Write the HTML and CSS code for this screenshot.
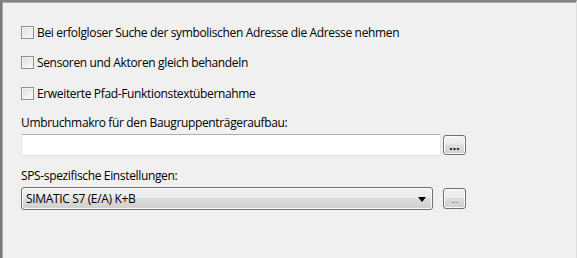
FILE: index.html
```html
<!DOCTYPE html>
<html lang="de">
<head>
  <meta charset="UTF-8" />
  <title>Einstellungen</title>
  <link rel="stylesheet" href="styles.css">
</head>
<body>
  <div class="panel">
    <div class="checks">
      <label class="check-row"><span class="box"></span>Bei erfolgloser Suche der symbolischen Adresse die Adresse nehmen</label>
      <label class="check-row"><span class="box"></span>Sensoren und Aktoren gleich behandeln</label>
      <label class="check-row"><span class="box"></span>Erweiterte Pfad-Funktionstextübernahme</label>
    </div>

    <div class="field">
      <div class="field-label">Umbruchmakro für den Baugruppenträgeraufbau:</div>
      <div class="field-line">
        <div class="textbox"></div>
        <button class="dots-btn bold">...</button>
      </div>
    </div>

    <div class="field">
      <div class="field-label">SPS-spezifische Einstellungen:</div>
      <div class="field-line wide-gap">
        <div class="combo">
          <span>SIMATIC S7 (E/A) K+B</span>
          <span class="arrow"></span>
        </div>
        <button class="dots-btn small">...</button>
      </div>
    </div>
  </div>
</body>
</html>
```

FILE: styles.css
```css
* {
  box-sizing: border-box;
}

html, body {
  margin: 0;
  height: 100%;
}

body {
  font-family: 'Open Sans', 'Noto Sans', sans-serif;
  font-size: 12px;
  letter-spacing: -0.35px;
  color: #000;
  background: #f0f0f0;
}

.panel {
  height: 258px;
  border-top: 2px solid #858585;
  border-left: 2px solid #7a7a7a;
  border-right: 1px solid #dedede;
  box-shadow: inset 1px 1px 0 #a8a8a8;
  padding: 24px 0 0 19px;
}

.checks {
  display: flex;
  flex-direction: column;
}

.check-row {
  display: flex;
  align-items: center;
  height: 13px;
  margin-bottom: 17px;
  line-height: 13px;
}

.check-row:nth-child(2) {
  margin-bottom: 18px;
}

.check-row:last-child {
  margin-bottom: 0;
}

.box {
  width: 13px;
  height: 13px;
  border: 1px solid #8e8f8f;
  background: linear-gradient(135deg, #dcdcdc, #fbfbfb);
  box-shadow: inset 0 0 0 1px #f4f4f4;
  margin-right: 3px;
  flex: none;
}

.field {
  margin-top: 15px;
}

.field + .field {
  margin-top: 12px;
}

.field-label {
  height: 16px;
  line-height: 16px;
  margin-bottom: 3px;
}

.field-line {
  display: flex;
  align-items: center;
  gap: 2px;
}

.field-line.wide-gap {
  gap: 10px;
}

.textbox {
  width: 420px;
  height: 22px;
  background: #fff;
  border: 1px solid #e2e3ea;
  border-top-color: #abadb3;
  border-radius: 2px;
}

.combo {
  width: 412px;
  height: 23px;
  border: 1px solid #707070;
  border-radius: 3px;
  background: linear-gradient(#f2f2f2 0%, #ebebeb 45%, #dddddd 50%, #cfcfcf 100%);
  box-shadow: inset 0 0 0 1px #fbfbfb;
  display: flex;
  align-items: center;
  justify-content: space-between;
  padding: 0 6px 0 4px;
}

.arrow {
  width: 0;
  height: 0;
  border-left: 4px solid transparent;
  border-right: 4px solid transparent;
  border-top: 5px solid #000;
  margin-top: 1px;
}

.dots-btn {
  width: 23px;
  height: 21px;
  padding: 0 0 3px;
  border: 1px solid #707070;
  border-radius: 3px;
  background: linear-gradient(#f2f2f2 0%, #ebebeb 45%, #dddddd 50%, #cfcfcf 100%);
  box-shadow: inset 0 0 0 1px #fbfbfb;
  font-family: inherit;
  font-size: 12px;
  line-height: 10px;
  color: #000;
  display: flex;
  align-items: flex-end;
  justify-content: center;
}

.dots-btn.bold {
  font-weight: bold;
  height: 20px;
}

.dots-btn.small {
  font-size: 9px;
  color: #5a4a7a;
}
```
